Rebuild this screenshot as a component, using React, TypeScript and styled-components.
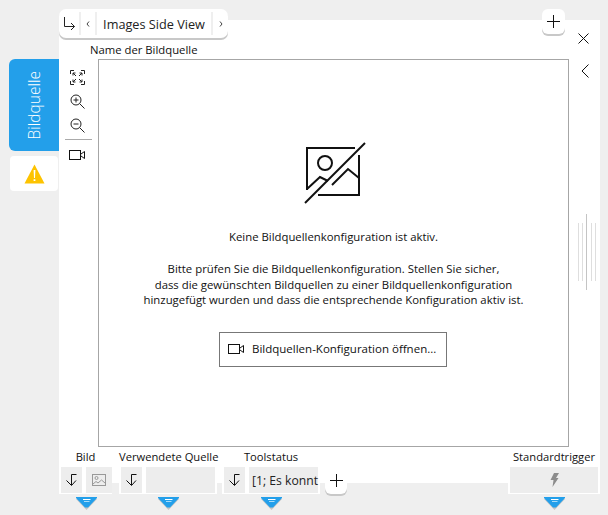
import React from "react";
import styled, { createGlobalStyle } from "styled-components";

const Global = createGlobalStyle`
  html, body { margin: 0; padding: 0; background: #efefef; }
  body { font-family: "Open Sans", "Noto Sans", sans-serif; font-size: 12px; color: #111; }
`;

const Page = styled.div`
  width: 608px; height: 515px; overflow: hidden; background: #efefef;
  display: flex; align-items: flex-start;
`;
const Rail = styled.div`
  width: 59px; flex: none; padding-top: 59px; box-sizing: border-box;
  display: flex; flex-direction: column; align-items: flex-end;
`;
const ActiveTab = styled.div`
  width: 50px; height: 92px; background: #239fea; border-radius: 6px 0 0 6px;
  display: flex; align-items: center; justify-content: center;
`;
const ActiveLabel = styled.span`
  writing-mode: vertical-rl; transform: rotate(180deg); color: #fff;
  font-size: 15.5px; font-weight: 300;
`;
const WarnTab = styled.div`
  width: 48px; height: 35px; margin: 5px 1px 0 0; background: #fff; border-radius: 4px;
  display: flex; align-items: center; justify-content: center;
`;
const Panel = styled.div`
  margin-top: 20px; width: 541px; height: 463px; background: #fff; flex: none;
  display: grid; grid-template-columns: 39px 471px 31px; grid-template-rows: 39px 388px 36px;
`;
const Header = styled.div`
  grid-column: 1 / 4; margin-top: -11px; height: 50px; display: flex; flex-direction: column;
`;
const HeaderTop = styled.div`
  height: 35px; flex: none; display: flex; align-items: flex-start;
`;
const Strip = styled.div`
  height: 29px; width: 169px; background: #fff; border-radius: 7px; box-shadow: 0 2px 0 #c8c8c8;
  display: flex; align-items: stretch; box-sizing: border-box; padding: 3px 0;
`;
const StripCell = styled.div<{ $w: number; $sep?: boolean }>`
  width: ${(p) => p.$w}px; flex: none; display: flex; align-items: center; justify-content: center;
  box-sizing: border-box; border-right: ${(p) => (p.$sep ? "2px solid #efefef" : "none")};
  font-size: 12.7px; color: #222; white-space: nowrap;
`;
const HeaderRight = styled.div`
  margin-left: auto; display: flex; align-items: flex-start;
`;
const AddTop = styled.div`
  width: 23px; height: 25px; background: #fff; border-radius: 6px; box-shadow: 0 2px 0 #c8c8c8;
  display: flex; align-items: center; justify-content: center; margin-right: 13px;
`;
const CloseSlot = styled.div`
  width: 22px; margin-top: 24px; line-height: 0;
`;
const FieldLabel = styled.div`
  padding-left: 31px; white-space: nowrap; font-size: 11.3px; line-height: 12px;
`;
const Tools = styled.div`
  display: flex; flex-direction: column; align-items: center;
`;
const ToolBtn = styled.div`
  width: 39px; height: 24px; padding-right: 3px; box-sizing: border-box;
  display: flex; align-items: center; justify-content: center;
`;
const ToolSpacer = styled.div`
  height: 6px;
`;
const ToolRule = styled.div`
  width: 27px; height: 1px; background: #aaa; margin: 2px 0 3px;
`;
const Frame = styled.div`
  border: 1px solid #a6a6a6; box-sizing: border-box; background: #fff;
  display: flex; flex-direction: column; align-items: center;
  padding-top: 82px; font-size: 11.35px; line-height: 16px; text-align: center; color: #111;
`;
const Logo = styled.svg`
  margin-left: 2px; flex: none;
`;
const Message = styled.p`
  margin: 25px 0 0; white-space: nowrap;
`;
const Instructions = styled.p`
  margin: 16px 0 0; white-space: nowrap; line-height: 15.5px;
`;
const OpenButton = styled.div`
  margin: 24px 1px 0 0; width: 228px; height: 35px; border: 1px solid #777; box-sizing: border-box;
  display: flex; align-items: center; gap: 8px; padding-left: 8px; white-space: nowrap; font-size: 11.5px;
`;
const Side = styled.div`
  display: flex; flex-direction: column; align-items: flex-start;
`;
const Chevron = styled.div`
  margin: 0 0 0 12px; height: 24px; display: flex; align-items: center;
`;
const Splitter = styled.div`
  margin: 131px 0 0 9px; display: flex; gap: 3px; align-items: center; height: 76px;
`;
const Grip = styled.div<{ $tall?: boolean }>`
  width: 1px; height: ${(p) => (p.$tall ? 76 : 58)}px;
  margin-right: ${(p) => (p.$tall ? 1 : 0)}px;
  background: ${(p) => (p.$tall ? "#c4c4c4" : "#dedede")};
`;
const Footer = styled.div`
  grid-column: 1 / 4; display: flex; align-items: flex-start; height: 64px;
`;
const Group = styled.div<{ $w: number; $ml?: number }>`
  width: ${(p) => p.$w}px; margin-left: ${(p) => p.$ml ?? 0}px; flex: none;
  display: flex; flex-direction: column; align-items: stretch;
`;
const GroupLabel = styled.div`
  height: 20px; line-height: 20px; text-align: center; font-size: 11.2px; white-space: nowrap;
`;
const Controls = styled.div`
  background: #fff; height: 27px; padding: 0 2px; display: flex; gap: 4px; box-sizing: border-box;
`;
const Cell = styled.div<{ $w?: number; $grow?: boolean }>`
  width: ${(p) => (p.$w ? `${p.$w}px` : "auto")}; flex: ${(p) => (p.$grow ? 1 : "none")};
  height: 26px; background: #ededed; display: flex; align-items: center; justify-content: center;
  white-space: nowrap; font-size: 12.2px; color: #222;
`;
const StatusText = styled.span`
  width: 100%; padding-left: 3px;
`;
const Caret = styled.div`
  align-self: center; margin: 3px 0 0 1px; height: 13px; line-height: 0;
`;
const AddBottom = styled.div`
  width: 22px; height: 27px; margin: 20px 0 0 5px; background: #fff; border-radius: 0 0 6px 6px;
  box-shadow: 0 2px 0 #c8c8c8; display: flex; align-items: center; justify-content: center; flex: none;
`;

const BluePointer = () => (
  <svg width="21" height="13" viewBox="0 0 21 13">
    <path d="M0 2 L10.5 13 L21 2 Z" fill="#c4c4c4" />
    <path d="M0 0 H21 V1 L12 10.5 H9 L0 1 Z" fill="#239fea" />
    <path d="M7 2.5 H14.5" stroke="#fff" strokeWidth="1" />
    <path d="M8 4.5 H13.5" stroke="#a9dcf8" strokeWidth="1" />
  </svg>
);
const Down = () => (
  <svg width="11" height="12" viewBox="0 0 11 12" fill="none" stroke="#111" strokeWidth="1">
    <path d="M10.5 .5 H5.5 V11 M.5 6.5 L5.5 11.5 L10 6.5" />
  </svg>
);
const Camera = () => (
  <svg width="16" height="10" viewBox="0 0 16 10" fill="none" stroke="#111" strokeWidth="1">
    <rect x="0.5" y="0.5" width="11" height="9" />
    <path d="M12 4 L15.5 1.5 V8.5 L12 6" />
  </svg>
);
const Plus = () => (
  <svg width="15" height="15" viewBox="0 0 15 15" stroke="#111" strokeWidth="1">
    <path d="M7.5 1 V14 M1 7.5 H14" />
  </svg>
);
const Magnifier = ({ plus }: { plus?: boolean }) => (
  <svg width="15" height="15" viewBox="0 0 15 15" fill="none" stroke="#222" strokeWidth="1">
    <circle cx="6" cy="6" r="5" />
    <path d="M9.7 9.7 L14.5 14.5 M3.5 6 H8.5" />
    {plus && <path d="M6 3.5 V8.5" />}
  </svg>
);
const Fit = () => (
  <svg width="15" height="15" viewBox="0 0 15 15" fill="none" stroke="#222" strokeWidth="1">
    <path d="M.5 4 V.5 H4 M11 .5 H14.5 V4 M14.5 11 V14.5 H11 M4 14.5 H.5 V11" />
    <path d="M3 3 L6 6 M3 5.5 V3 H5.5 M12 3 L9 6 M9.5 3 H12 V5.5 M3 12 L6 9 M3 9.5 V12 H5.5 M12 12 L9 9 M9.5 12 H12 V9.5" />
  </svg>
);

export default function App() {
  return (
    <Page>
      <Global />
      <Rail>
        <ActiveTab><ActiveLabel>Bildquelle</ActiveLabel></ActiveTab>
        <WarnTab>
          <svg width="21" height="20" viewBox="0 0 21 20">
            <path d="M10.5 .5 L20.5 19.5 H.5 Z" fill="#fdc300" />
            <path d="M9.6 6 H11.4 L11 14 H10 Z M9.6 15.3 H11.4 V17 H9.6 Z" fill="#fff" />
          </svg>
        </WarnTab>
      </Rail>
      <Panel>
        <Header>
          <HeaderTop>
            <Strip>
              <StripCell $w={22} $sep>
                <svg width="11" height="13" viewBox="0 0 11 13" fill="none" stroke="#222" strokeWidth="1">
                  <path d="M.5 0 V9.5 H10.5 M7 6 L10.5 9.5 L7 13" />
                </svg>
              </StripCell>
              <StripCell $w={16} $sep>
                <svg width="4" height="6" viewBox="0 0 4 6" fill="none" stroke="#444"><path d="M3 .5 L1 3 L3 5.5" /></svg>
              </StripCell>
              <StripCell $w={116} $sep>Images Side View</StripCell>
              <StripCell $w={15}>
                <svg width="4" height="6" viewBox="0 0 4 6" fill="none" stroke="#444"><path d="M1 .5 L3 3 L1 5.5" /></svg>
              </StripCell>
            </Strip>
            <HeaderRight>
              <AddTop><Plus /></AddTop>
              <CloseSlot>
                <svg width="11" height="11" viewBox="0 0 11 11" stroke="#111" strokeWidth="1">
                  <path d="M.5 .5 L10.5 10.5 M10.5 .5 L.5 10.5" />
                </svg>
              </CloseSlot>
            </HeaderRight>
          </HeaderTop>
          <FieldLabel>Name der Bildquelle</FieldLabel>
        </Header>
        <Tools>
          <ToolSpacer />
          <ToolBtn><Fit /></ToolBtn>
          <ToolBtn><Magnifier plus /></ToolBtn>
          <ToolBtn><Magnifier /></ToolBtn>
          <ToolRule />
          <ToolBtn><Camera /></ToolBtn>
        </Tools>
        <Frame>
          <Logo width="62" height="62" viewBox="0 0 62 62" fill="none" stroke="#111" strokeWidth="2">
            <path d="M3 48 V6 H51 M55 13 V53 H14" />
            <circle cx="21" cy="21" r="7" />
            <path d="M3 47 L16 35 L24 39 M28 43 L44 27 L55 36" />
            <path d="M61 1 L1 61" />
          </Logo>
          <Message>Keine Bildquellenkonfiguration ist aktiv.</Message>
          <Instructions>
            Bitte prüfen Sie die Bildquellenkonfiguration. Stellen Sie sicher,<br />
            dass die gewünschten Bildquellen zu einer Bildquellenkonfiguration<br />
            hinzugefügt wurden und dass die entsprechende Konfiguration aktiv ist.
          </Instructions>
          <OpenButton><Camera />Bildquellen-Konfiguration öffnen...</OpenButton>
        </Frame>
        <Side>
          <Chevron>
            <svg width="8" height="14" viewBox="0 0 8 14" fill="none" stroke="#111"><path d="M7.5 .5 L1 7 L7.5 13.5" /></svg>
          </Chevron>
          <Splitter>
            <Grip /><Grip /><Grip $tall /><Grip /><Grip />
          </Splitter>
        </Side>
        <Footer>
          <Group $w={53}>
            <GroupLabel>Bild</GroupLabel>
            <Controls>
              <Cell $w={21}><Down /></Cell>
              <Cell $w={26}>
                <svg width="14" height="12" viewBox="0 0 14 12" fill="none" stroke="#999">
                  <rect x=".5" y=".5" width="13" height="11" />
                  <circle cx="4.5" cy="4" r="1.5" />
                  <path d="M1 10 L4 7.5 L6 9 L9.5 6 L13 9" />
                </svg>
              </Cell>
            </Controls>
            <Caret><BluePointer /></Caret>
          </Group>
          <Group $w={98} $ml={7}>
            <GroupLabel>Verwendete Quelle</GroupLabel>
            <Controls>
              <Cell $w={21}><Down /></Cell>
              <Cell $grow />
            </Controls>
            <Caret><BluePointer /></Caret>
          </Group>
          <Group $w={98} $ml={5}>
            <GroupLabel>Toolstatus</GroupLabel>
            <Controls>
              <Cell $w={21}><Down /></Cell>
              <Cell $grow><StatusText>[1; Es konnt</StatusText></Cell>
            </Controls>
            <Caret><BluePointer /></Caret>
          </Group>
          <AddBottom><Plus /></AddBottom>
          <Group $w={92} $ml={161}>
            <GroupLabel>Standardtrigger</GroupLabel>
            <Controls>
              <Cell $grow>
                <svg width="9" height="14" viewBox="0 0 9 14"><path d="M4 0 H9 L6 5 H8.5 L2.5 14 L3.5 7 H0.5 Z" fill="#8c8c8c" /></svg>
              </Cell>
            </Controls>
            <Caret><BluePointer /></Caret>
          </Group>
        </Footer>
      </Panel>
    </Page>
  );
}
